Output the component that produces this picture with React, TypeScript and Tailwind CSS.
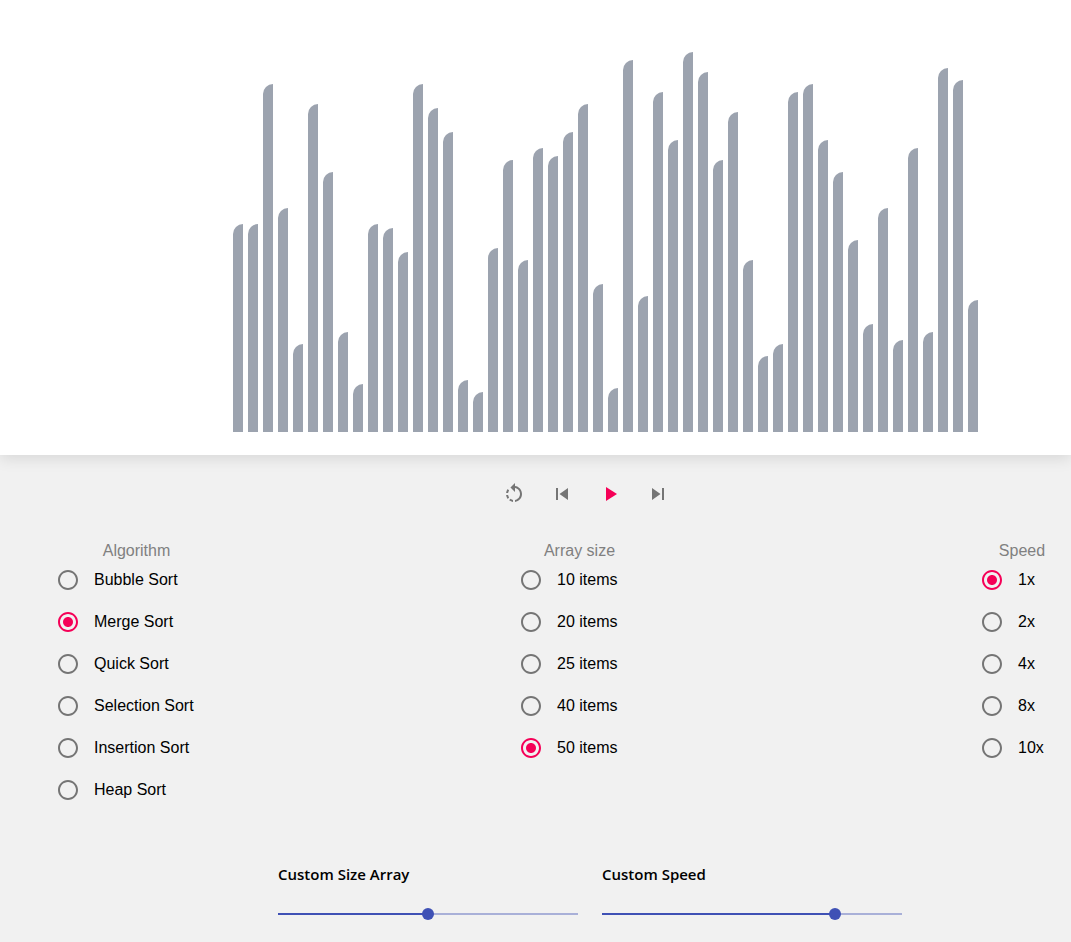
import React from 'react';

const BAR_TOPS = [224, 224, 84, 208, 344, 104, 172, 332, 384, 224, 228, 252, 84, 108, 132, 380, 392, 248, 160, 260, 148, 156, 132, 104, 284, 388, 60, 296, 92, 140, 52, 72, 160, 112, 260, 356, 344, 92, 84, 140, 172, 240, 324, 208, 340, 148, 332, 68, 80, 300];

const ALGORITHMS = ['Bubble Sort', 'Merge Sort', 'Quick Sort', 'Selection Sort', 'Insertion Sort', 'Heap Sort'];
const SIZES = ['10 items', '20 items', '25 items', '40 items', '50 items'];
const SPEEDS = ['1x', '2x', '4x', '8x', '10x'];

const Icon: React.FC<{ d: string; className?: string }> = ({ d, className = 'fill-[#757575]' }) => (
  <button className="w-12 h-12 flex items-center justify-center">
    <svg viewBox="0 0 24 24" className={`w-6 h-6 ${className}`}>
      <path d={d} />
    </svg>
  </button>
);

const RadioGroup: React.FC<{ title: string; options: string[]; selected: string; className: string }> = ({ title, options, selected, className }) => (
  <div className={className}>
    <div className="text-center text-[16px] leading-[18px] text-[#808080] h-[17px]">{title}</div>
    {options.map(o => (
      <div key={o} className="flex items-center h-[42px]">
        <svg viewBox="0 0 24 24" className={`w-6 h-6 -ml-[2px] shrink-0 ${o === selected ? 'fill-[#f50057]' : 'fill-[#757575]'}`}>
          <path d="M12 2C6.48 2 2 6.48 2 12s4.48 10 10 10 10-4.48 10-10S17.52 2 12 2zm0 18c-4.42 0-8-3.58-8-8s3.58-8 8-8 8 3.58 8 8-3.58 8-8 8z" />
          {o === selected && <path d="M12 7c-2.76 0-5 2.24-5 5s2.24 5 5 5 5-2.24 5-5-2.24-5-5-5z" />}
        </svg>
        <span className="ml-[14px] text-[16px] text-black">{o}</span>
      </div>
    ))}
  </div>
);

const Slider: React.FC<{ label: string; percent: number }> = ({ label, percent }) => (
  <div className="w-[300px]">
    <div className="text-[15px] leading-5 font-semibold text-black font-['Open_Sans',sans-serif]">{label}</div>
    <div className="relative h-[2px] mt-[29px] bg-[#3f51b5]/40">
      <div className="h-full bg-[#3f51b5]" style={{ width: `${percent}%` }} />
      <div className="absolute top-[-5px] w-3 h-3 -ml-[6px] rounded-full bg-[#3f51b5]" style={{ left: `${percent}%` }} />
    </div>
  </div>
);

export default function App() {
  return (
    <div className="h-[942px] overflow-hidden bg-[#f1f1f1] font-['Liberation_Sans',Arial,sans-serif]">
      <div className="relative h-[455px] bg-white shadow-[0_4px_14px_rgba(0,0,0,0.1)] pl-[233px] pb-[23px] flex items-end gap-[5px]">
        {BAR_TOPS.map((top, i) => (
          <div key={i} className="w-[10px] bg-[#9ca3af] rounded-tl-[10px]" style={{ height: 432 - top }} />
        ))}
      </div>

      <div className="flex pl-[490px] pt-[15px]">
        <Icon d="M7.11 8.53L5.7 7.11C4.8 8.27 4.24 9.61 4.07 11h2.02c.14-.87.49-1.72 1.02-2.47zM6.09 13H4.07c.17 1.39.72 2.73 1.62 3.89l1.41-1.42c-.52-.75-.87-1.59-1.01-2.47zm1.01 5.32c1.16.9 2.51 1.44 3.9 1.61V17.9c-.87-.15-1.71-.49-2.46-1.03L7.1 18.32zM13 4.07V1L8.45 5.55 13 10V6.09c2.84.48 5 2.94 5 5.91s-2.16 5.43-5 5.91v2.02c3.95-.49 7-3.85 7-7.93s-3.05-7.44-7-7.93z" />
        <Icon d="M6 6h2v12H6zm3.5 6l8.5 6V6z" />
        <Icon d="M8 5v14l11-7z" className="fill-[#f50057]" />
        <Icon d="M6 18l8.5-6L6 6v12zM16 6v12h2V6h-2z" />
      </div>

      <div className="flex pl-[58px] pt-[24px]">
        <RadioGroup title="Algorithm" options={ALGORITHMS} selected="Merge Sort" className="w-[157px]" />
        <RadioGroup title="Array size" options={SIZES} selected="50 items" className="w-[117px] ml-[306px]" />
        <RadioGroup title="Speed" options={SPEEDS} selected="1x" className="w-[80px] ml-[344px]" />
      </div>

      <div className="flex gap-6 pl-[278px] pt-[53px]">
        <Slider label="Custom Size Array" percent={50} />
        <Slider label="Custom Speed" percent={77.7} />
      </div>
    </div>
  );
}
